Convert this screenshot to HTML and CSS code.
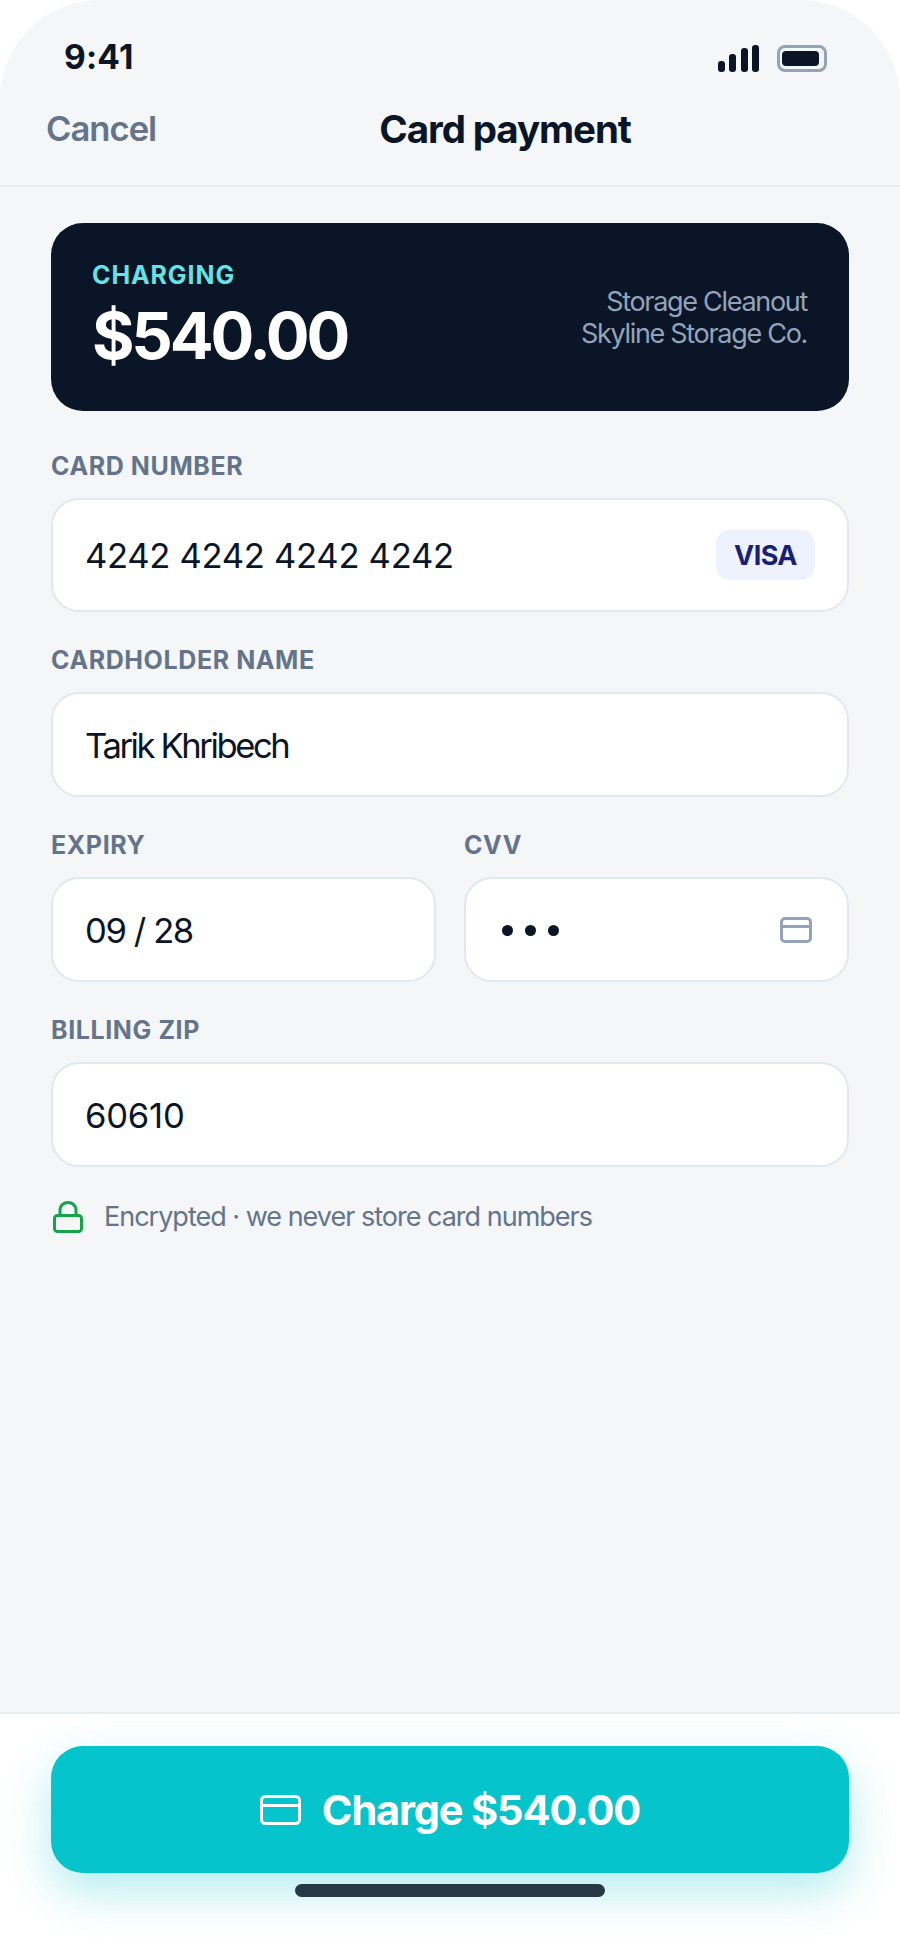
FILE: index.html
```html
<!DOCTYPE html>
<html lang="en">

<head>
    <meta charset="UTF-8">
    <title>Card payment</title>
    <link rel="stylesheet" href="styles.css">
</head>

<body>

    <div class="phone">
        <div class="status-bar">
            <div class="time">9:41</div>
            <div class="status-icons">
                <div class="signal">
                    <span class="bar-1"></span>
                    <span class="bar-2"></span>
                    <span class="bar-3"></span>
                    <span class="bar-4"></span>
                </div>
                <div class="battery"><span></span></div>
            </div>
        </div>

        <div class="nav">
            <div class="cancel">Cancel</div>
            <div class="nav-title">Card payment</div>
        </div>

        <div class="content">
            <div class="hero">
                <div>
                    <div class="hero-label">CHARGING</div>
                    <div class="hero-amount">$540.00</div>
                </div>
                <div class="hero-note">Storage Cleanout<br>Skyline Storage Co.</div>
            </div>

            <div class="label">CARD NUMBER</div>
            <div class="field field-card">
                <div class="value value-number">4242 4242 4242 4242</div>
                <div class="visa">VISA</div>
            </div>

            <div class="label">CARDHOLDER NAME</div>
            <div class="field">
                <div class="value value-name">Tarik Khribech</div>
            </div>

            <div class="two-col">
                <div>
                    <div class="label">EXPIRY</div>
                    <div class="field">
                        <div class="value value-expiry">09 / 28</div>
                    </div>
                </div>
                <div>
                    <div class="label">CVV</div>
                    <div class="field field-cvv">
                        <div class="dots"><span></span><span></span><span></span></div>
                        <svg class="cvv-icon" viewBox="0 0 32 26" fill="none" stroke="currentColor" stroke-width="3">
                            <rect x="1.5" y="1.5" width="29" height="23" rx="3.5"></rect>
                            <path d="M1.5 9.5h29"></path>
                        </svg>
                    </div>
                </div>
            </div>

            <div class="label">BILLING ZIP</div>
            <div class="field">
                <div class="value">60610</div>
            </div>

            <div class="secure">
                <svg class="lock" viewBox="0 0 30 32" fill="none" stroke="currentColor" stroke-width="3">
                    <rect x="1.5" y="14.5" width="27" height="16" rx="3"></rect>
                    <path d="M7 14.5V8.500a8 7 0 0 1 16 0v6"></path>
                </svg>
                <div>Encrypted · we never store card numbers</div>
            </div>
        </div>

        <div class="footer">
            <div class="charge">
                <svg class="charge-icon" viewBox="0 0 41 30" fill="none" stroke="currentColor" stroke-width="3">
                    <rect x="1.500" y="1.500" width="38" height="27" rx="4"></rect>
                    <path d="M1.500 10.500h38"></path>
                </svg>
                <div>Charge $540.00</div>
            </div>
            <div class="home-bar"></div>
        </div>
    </div>

</body>

</html>
```

FILE: styles.css
```css
* {
    box-sizing: border-box;
}

html,
body {
    margin: 0;
    background-color: #fff;
}

body {
    font-family: Inter, "Liberation Sans", sans-serif;
    color: #0a1628;
}

.phone {
    position: relative;
    width: 900px;
    height: 1947px;
    display: flex;
    flex-direction: column;
    background-color: #f5f6f8;
    border-radius: 100px 100px 0 0;
    overflow: hidden;
}

/* status bar */
.status-bar {
    height: 90px;
    padding: 38px 73px 0 64px;
    display: flex;
    justify-content: space-between;
    align-items: flex-start;
}

.time {
    font-size: 33.5px;
    font-weight: 700;
    line-height: 38px;
    letter-spacing: 0.2px;
}

.status-icons {
    display: flex;
    align-items: flex-end;
    gap: 18px;
    padding-top: 7px;
}

.signal {
    display: flex;
    align-items: flex-end;
    gap: 4.5px;
    height: 27px;
}

.signal span {
    width: 7px;
    background-color: #0a1628;
    border-radius: 3px;
}

.bar-1 { height: 11px; }
.bar-2 { height: 18px; }
.bar-3 { height: 24px; }
.bar-4 { height: 27px; }

.battery {
    width: 50px;
    height: 27px;
    padding: 3px 5px 3px 2px;
    border: 3px solid #94a3b8;
    border-radius: 8px;
}

.battery span {
    display: block;
    height: 100%;
    background-color: #0a1628;
    border-radius: 4px;
}

/* nav */
.nav {
    height: 97px;
    padding: 0 46px;
    display: flex;
    align-items: flex-start;
    border-bottom: 2px solid #e9edf2;
}

.cancel {
    margin-top: 17px;
    font-size: 34.6px;
    line-height: 42px;
    font-weight: 600;
    letter-spacing: -1px;
    color: #64748b;
}

.nav-title {
    flex: 1;
    margin-top: 16px;
    font-size: 38.5px;
    line-height: 46px;
    font-weight: 700;
    letter-spacing: -1.1px;
    text-align: center;
}

/* content */
.content {
    flex: 1;
    padding: 36px 51px 0;
}

.hero {
    height: 188px;
    margin-bottom: 40px;
    padding: 0 42px 2.5px 41px;
    display: flex;
    align-items: center;
    justify-content: space-between;
    background-color: #0a1628;
    border-radius: 32px;
}

.hero-label {
    font-size: 25px;
    line-height: 30px;
    font-weight: 700;
    letter-spacing: 0.9px;
    color: #67e2e4;
}

.hero-amount {
    margin-top: 9.5px;
    font-size: 65px;
    line-height: 72px;
    font-weight: 700;
    letter-spacing: -3.2px;
    color: #fff;
}

.hero-note {
    margin-top: 5px;
    font-size: 27px;
    line-height: 32px;
    letter-spacing: -1.3px;
    text-align: right;
    color: #94a3b8;
}

.label {
    margin-top: 33px;
    margin-bottom: 17px;
    font-size: 25px;
    line-height: 30px;
    font-weight: 700;
    letter-spacing: 0.6px;
    color: #64748b;
}

.field {
    height: 105px;
    padding: 0 32px;
    display: flex;
    align-items: center;
    justify-content: space-between;
    background-color: #fff;
    border: 2.500px solid #e2e8f0;
    border-radius: 28px;
}

.field-card {
    height: 114px;
}

.value {
    font-size: 34.6px;
    letter-spacing: -0.2px;
}

.value-number {
    letter-spacing: -0.3px;
}

.value-name {
    letter-spacing: -2.4px;
}

.value-expiry {
    letter-spacing: -1.4px;
}

.visa {
    width: 99px;
    height: 50px;
    display: flex;
    align-items: center;
    justify-content: center;
    font-size: 27px;
    font-weight: 700;
    letter-spacing: -0.6px;
    color: #1a1f71;
    background-color: #eef2ff;
    border-radius: 14px;
}

.two-col {
    display: grid;
    grid-template-columns: 1fr 1fr;
    gap: 28px;
}

.dots {
    display: flex;
    gap: 12px;
    margin: 2px 0 0 4px;
}

.dots span {
    width: 11px;
    height: 11px;
    background-color: #0a1628;
    border-radius: 50%;
}

.cvv-icon {
    width: 32px;
    height: 26px;
    margin-right: 3px;
    color: #94a3b8;
}

.secure {
    margin-top: 33px;
    display: flex;
    align-items: center;
    gap: 21px;
    padding-left: 2px;
    font-size: 27px;
    letter-spacing: -1px;
    color: #64748b;
}

.lock {
    width: 30px;
    height: 32px;
    color: #16a34a;
}

/* footer */
.footer {
    height: 235px;
    padding: 32px 51px 0;
    background-color: #fff;
    border-top: 2px solid #e9edf2;
}

.charge {
    height: 127px;
    display: flex;
    align-items: center;
    justify-content: center;
    gap: 21px;
    font-size: 41.500px;
    font-weight: 700;
    letter-spacing: -1.150px;
    color: #fff;
    background-color: #06c4cc;
    border-radius: 32px;
    box-shadow: 0 18px 46px rgba(6, 196, 204, 0.3);
}

.charge-icon {
    width: 41px;
    height: 30px;
}

.home-bar {
    position: absolute;
    left: 295px;
    bottom: 50px;
    width: 310px;
    height: 13px;
    background-color: #293847;
    border-radius: 7px;
}
```
